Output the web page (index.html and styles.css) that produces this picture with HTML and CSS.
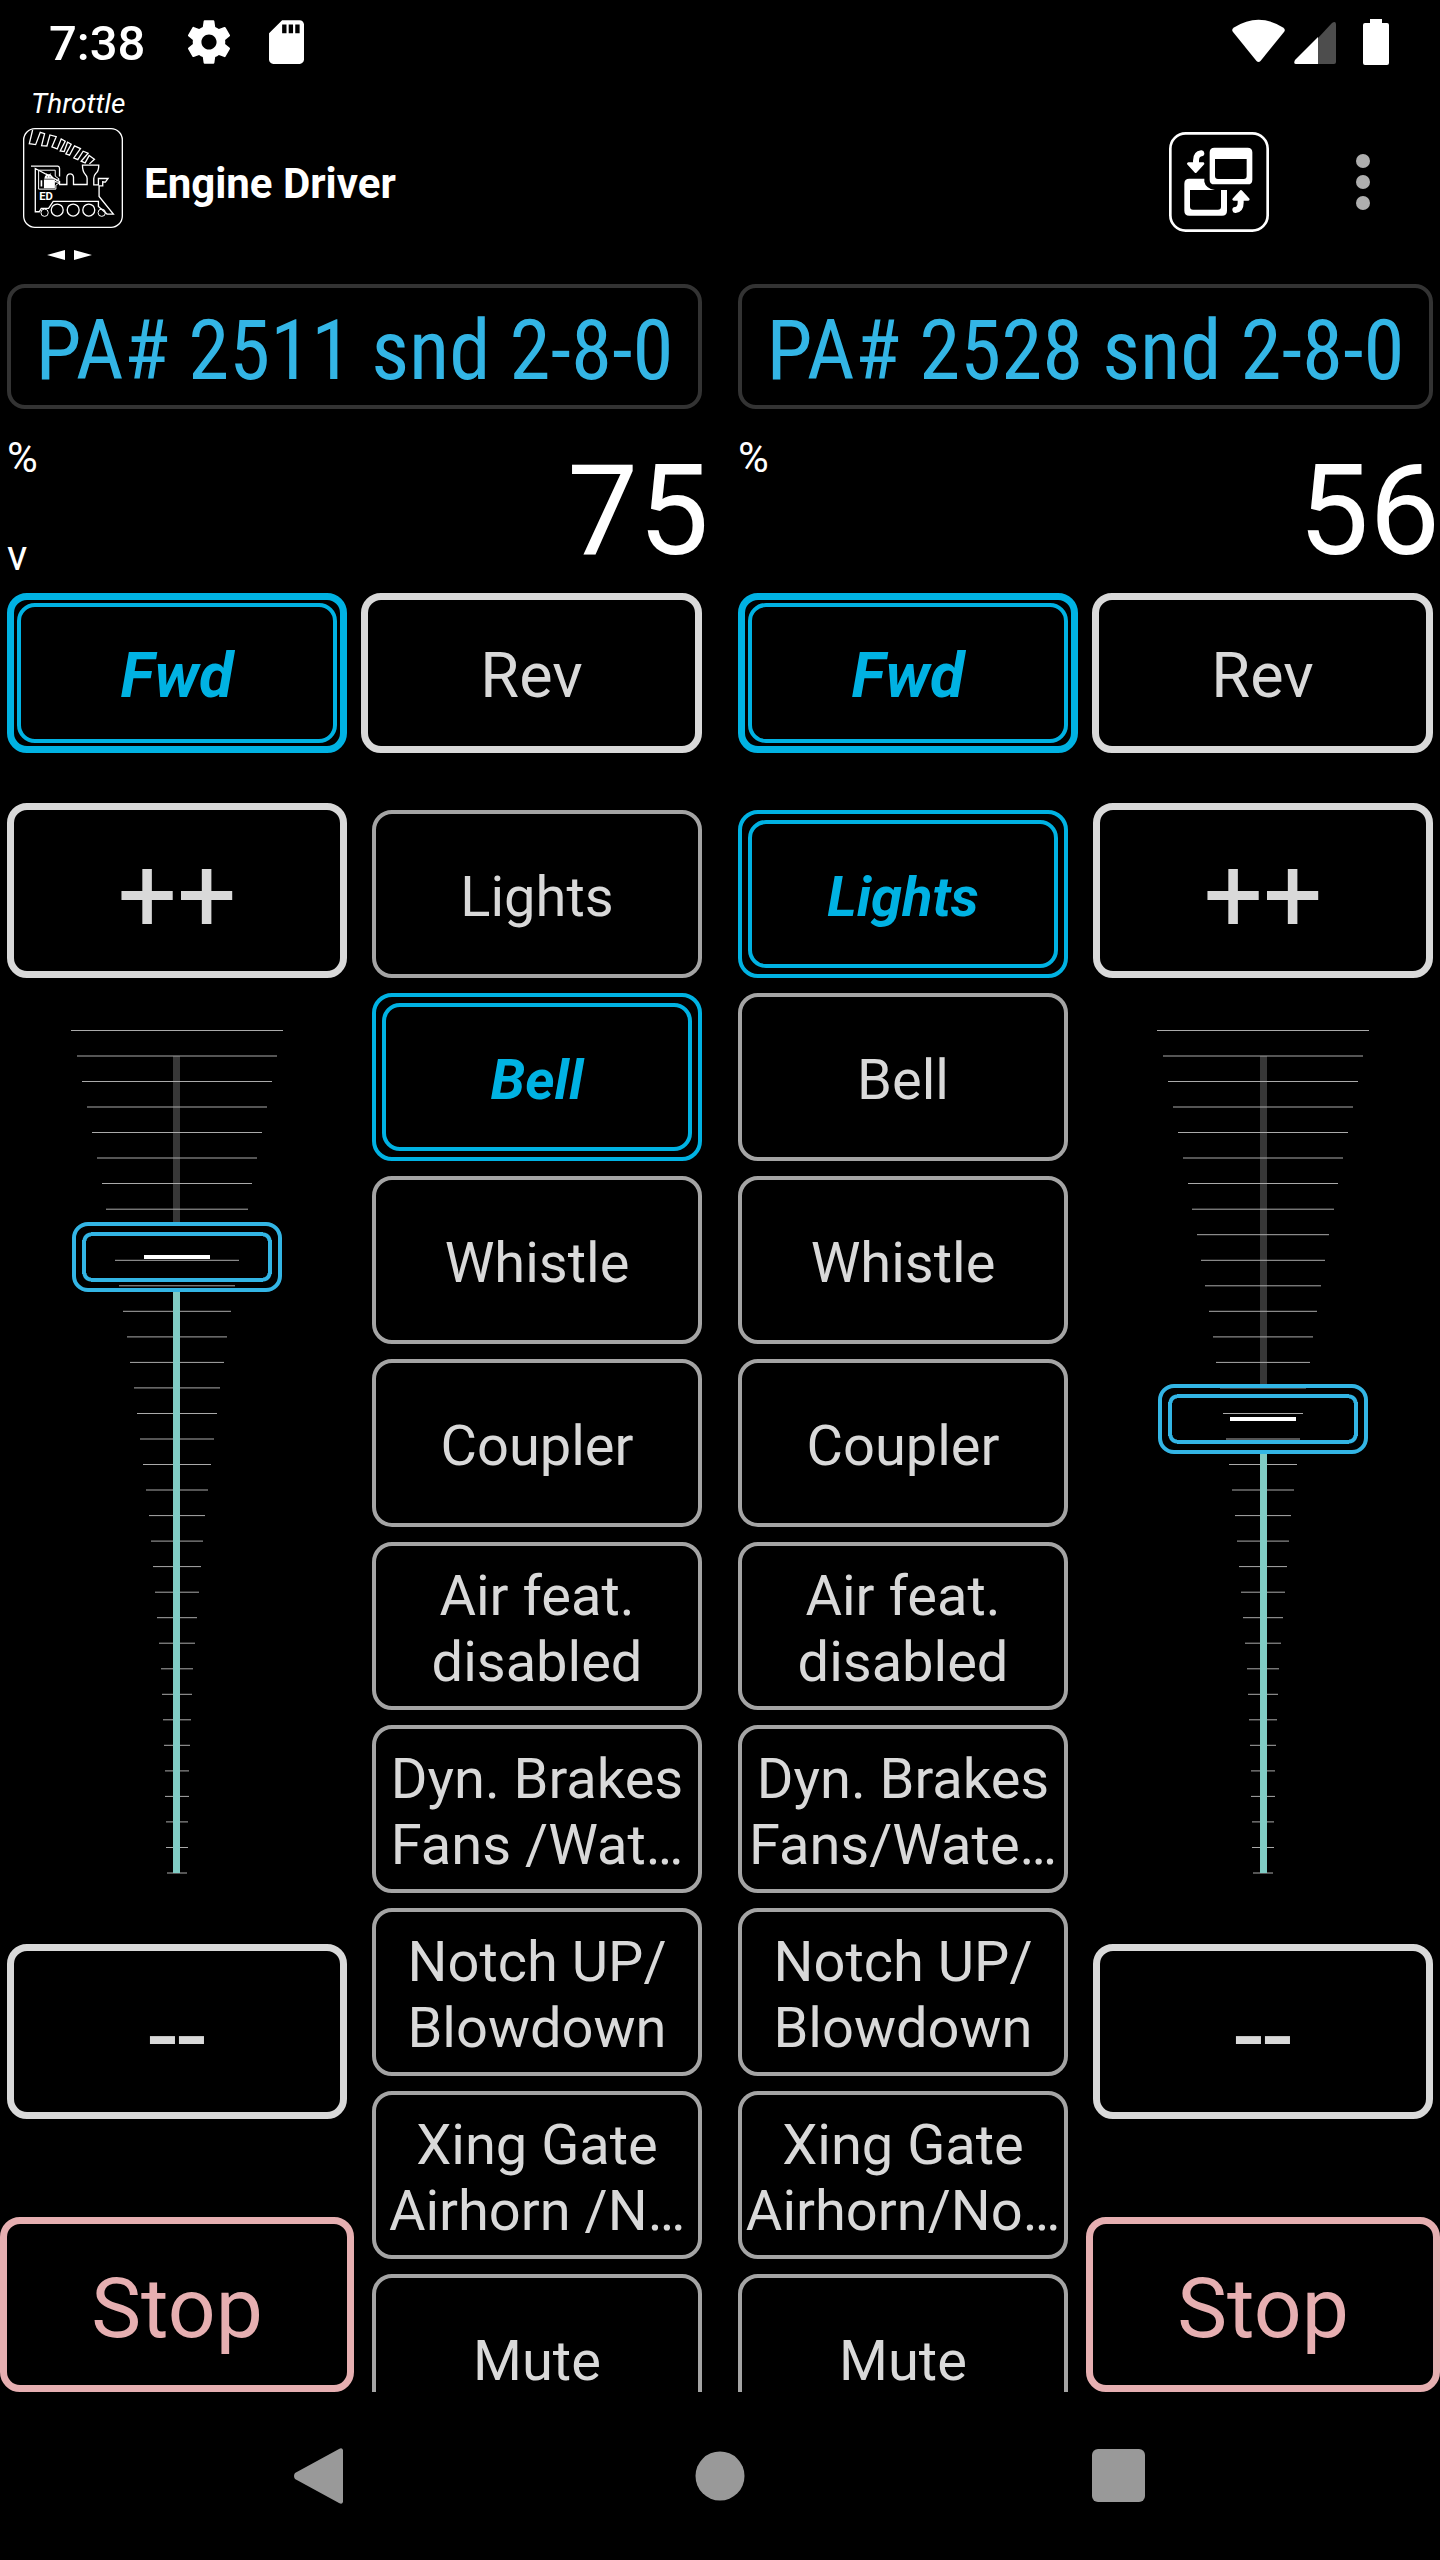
FILE: index.html
```html
<!DOCTYPE html>
<html lang="en">
<head>
<meta charset="utf-8">
<meta name="viewport" content="width=device-width, initial-scale=1">
<title>Engine Driver</title>
<link rel="stylesheet" href="styles.css">
</head>
<body>
<svg class="defs" aria-hidden="true">
  <defs>
    <path id="ticks" d="M0 9.5H212M6 35H206M11 60.5H201M16 86H196M21 111.5H191M26 137H186M31 162.5H181M35 188.2H177M40 213.7H172M44 239.3H168M48 264.8H164M52 290.3H160M56 315.9H156M59 341.4H153M63 366.9H149M66 392.5H146M69 418H143M72 443.5H140M75 469H137M78 494.6H134M80 520.1H132M82 545.6H130M84 571.2H128M86 596.7H126M88 622.2H124M90 647.8H122M91 673.3H121M92 698.8H120M93 724.3H119M94 749.9H118M94 775.4H118M95 800.9H117M95 826.5H117M96 852H116"/>
  </defs>
</svg>

<div class="statusbar">
  <time class="clock">7:38</time>
  <svg class="gear" viewBox="0 0 24 24" aria-hidden="true"><path d="M19.43 12.98c.04-.32.07-.64.07-.98s-.03-.66-.07-.98l2.11-1.65c.19-.15.24-.42.12-.64l-2-3.46c-.12-.22-.39-.3-.61-.22l-2.49 1c-.52-.4-1.08-.73-1.69-.98l-.38-2.65C14.46 2.18 14.25 2 14 2h-4c-.25 0-.46.18-.49.42l-.38 2.65c-.61.25-1.17.59-1.69.98l-2.49-1c-.23-.09-.49 0-.61.22l-2 3.46c-.13.22-.07.49.12.64l2.11 1.65c-.04.32-.07.65-.07.98s.03.66.07.98l-2.11 1.65c-.19.15-.24.42-.12.64l2 3.46c.12.22.39.3.61.22l2.49-1c.52.4 1.08.73 1.69.98l.38 2.65c.03.24.24.42.49.42h4c.25 0 .46-.18.49-.42l.38-2.65c.61-.25 1.17-.59 1.69-.98l2.49 1c.23.09.49 0 .61-.22l2-3.46c.12-.22.07-.49-.12-.64l-2.11-1.65zM12 15.5c-1.93 0-3.5-1.57-3.5-3.5s1.57-3.5 3.5-3.5 3.5 1.57 3.5 3.5-1.57 3.5-3.5 3.5z"/></svg>
  <svg class="sdcard" viewBox="4 2 16 20" aria-hidden="true"><path d="M18 2h-8L4.02 8 4 20c0 1.1.9 2 2 2h12c1.1 0 2-.9 2-2V4c0-1.1-.9-2-2-2zm-6 6h-2V4h2v4zm3 0h-2V4h2v4zm3 0h-2V4h2v4z"/></svg>
  <svg class="signals" viewBox="1232 19 158 47" aria-hidden="true">
    <path d="M1233 32Q1231 29.500 1234 27.500Q1258.500 12 1283 27.500Q1286 29.500 1284 32L1260.500 61Q1258.500 63 1256.500 61Z"/>
    <path fill="#4d4d4d" d="M1318 38L1332 23Q1336 20 1336 25V62Q1336 64 1334 64H1318Z"/>
    <path d="M1318 37V64H1296Q1293 64 1295 60Z"/>
    <path d="M1370 19h12v4h5q2 0 2 2v38q0 2-2 2h-22q-2 0-2-2V25q0-2 2-2h5z"/>
  </svg>
</div>

<header class="appbar">
  <div class="brand">
    <span class="screen">Throttle</span>
    <svg class="logo" viewBox="69 384 301 301" aria-hidden="true">
      <rect x="71" y="386" width="297" height="297" rx="34"/>
      <path d="M98 390L88 431L107 434L121 397L134 401L125 437L141 438L150 405L169 410L156 441L172 447L184 417L196 424L181 453L193 455L203 427L214 433L198 462L209 466L224 438L242 446L222 474L234 479L250 454L265 460L244 484L256 489L268 467L284 478L269 492"/>
      <path d="M93 499H174Q179 500 179 506V530M179 545V554H201V532Q202 522 211 522T221 532V554H262V535Q262 529 256 523Q248 514 248 496H297Q297 514 288 521Q282 527 282 536V555H296V536H325L317 547L309 546V558H298V590L341 643H322L296 620V605H160L146 626H124L118 636H106V506Z"/>
      <path d="M116 568V511H166V529L178 538L165 546L180 548L168 556V568Z" stroke-width="3"/>
      <path fill="#fff" stroke="none" d="M133 537Q134 527 140 525L138 520L144 523H148L154 520L152 525Q158 527 160 537ZM132 539H165V565H132ZM122 541H127V560H122Z"/>
      <path stroke="#000" stroke-width="2" d="M141 531h3M149 531h3"/>
      <g stroke-width="4"><circle cx="172" cy="631" r="18"/><circle cx="220" cy="631" r="18"/><circle cx="267" cy="631" r="18"/></g>
      <g stroke-width="3"><circle cx="134" cy="639" r="11"/><circle cx="306" cy="639" r="11"/></g>
      <text class="logo-text" x="118" y="600">ED</text>
    </svg>
    <svg class="swipe" viewBox="0 0 100 10" aria-hidden="true"><path d="M24 5L42 0V10ZM69 5L51 0V10Z"/></svg>
  </div>
  <h1 class="title">Engine Driver</h1>
  <button class="icon-btn" type="button" aria-label="Switch throttle layout">
    <svg class="swap" viewBox="207 396 300 300" aria-hidden="true">
      <rect x="211" y="400" width="292" height="292" rx="46" fill="none" stroke="#fff" stroke-width="8"/>
      <path fill-rule="evenodd" d="M343 443H443Q457 443 457 457V539Q457 553 443 553H343Q329 553 329 539V457Q329 443 343 443ZM345 477V528Q345 537 354 537H431Q440 537 440 528V477Z"/>
      <path d="M268 536H313V545Q317 565 345 570H270V620Q270 629 279 629H354Q363 629 363 620V570H381V632Q381 647 366 647H268Q253 647 253 632V551Q253 536 268 536Z"/>
      <path d="M304 460Q288 462 288 482V490M406 630Q422 628 422 608V600" fill="none" stroke="#fff" stroke-width="18" stroke-linecap="round"/>
      <path d="M265 491H309L287 515ZM401 598H445L423 574Z" stroke="#fff" stroke-width="8" stroke-linejoin="round"/>
    </svg>
  </button>
  <button class="icon-btn more" type="button" aria-label="More options">
    <svg class="dots" viewBox="0 0 14 56" aria-hidden="true"><circle cx="7" cy="7" r="7"/><circle cx="7" cy="28" r="7"/><circle cx="7" cy="49" r="7"/></svg>
  </button>
</header>

<main class="throttles">
  <section class="throttle">
    <button class="loco" type="button">PA# 2511 snd 2-8-0</button>
    <div class="readout">
      <div class="marks"><span>%</span><span>v</span></div>
      <output class="speed">75</output>
    </div>
    <div class="direction">
      <button class="btn active" type="button">Fwd</button>
      <button class="btn" type="button">Rev</button>
    </div>
    <div class="panel">
      <div class="controls">
        <button class="btn step" type="button" aria-label="Faster">++</button>
        <div class="slider">
          <svg class="scale" viewBox="0 0 212 887" aria-hidden="true">
            <path class="rail" d="M105.500 35V201"/>
            <use class="tick" href="#ticks"/>
            <path class="fill" d="M105.500 271V852"/>
          </svg>
          <input class="range" type="range" min="0" max="126" value="95" aria-label="Speed of PA# 2511">
        </div>
        <button class="btn step" type="button" aria-label="Slower">--</button>
        <button class="btn stop" type="button">Stop</button>
      </div>
      <div class="functions">
        <button class="fn" type="button">Lights</button>
        <button class="fn active" type="button">Bell</button>
        <button class="fn" type="button">Whistle</button>
        <button class="fn" type="button">Coupler</button>
        <button class="fn" type="button">Air feat.<br>disabled</button>
        <button class="fn" type="button">Dyn. Brakes<br>Fans /Wat…</button>
        <button class="fn" type="button">Notch UP/<br>Blowdown</button>
        <button class="fn" type="button">Xing Gate<br>Airhorn /N…</button>
        <button class="fn" type="button">Mute</button>
      </div>
    </div>
  </section>

  <section class="throttle">
    <button class="loco" type="button">PA# 2528 snd 2-8-0</button>
    <div class="readout">
      <div class="marks"><span>%</span></div>
      <output class="speed">56</output>
    </div>
    <div class="direction">
      <button class="btn active" type="button">Fwd</button>
      <button class="btn" type="button">Rev</button>
    </div>
    <div class="panel mirrored">
      <div class="functions">
        <button class="fn active" type="button">Lights</button>
        <button class="fn" type="button">Bell</button>
        <button class="fn" type="button">Whistle</button>
        <button class="fn" type="button">Coupler</button>
        <button class="fn" type="button">Air feat.<br>disabled</button>
        <button class="fn" type="button">Dyn. Brakes<br>Fans/Wate…</button>
        <button class="fn" type="button">Notch UP/<br>Blowdown</button>
        <button class="fn" type="button">Xing Gate<br>Airhorn/No…</button>
        <button class="fn" type="button">Mute</button>
      </div>
      <div class="controls">
        <button class="btn step" type="button" aria-label="Faster">++</button>
        <div class="slider">
          <svg class="scale" viewBox="0 0 212 887" aria-hidden="true">
            <path class="rail" d="M106.500 35V363"/>
            <use class="tick" href="#ticks"/>
            <path class="fill" d="M106.500 433V852"/>
          </svg>
          <input class="range" type="range" min="0" max="126" value="70" aria-label="Speed of PA# 2528">
        </div>
        <button class="btn step" type="button" aria-label="Slower">--</button>
        <button class="btn stop" type="button">Stop</button>
      </div>
    </div>
  </section>
</main>

<nav class="navbar">
  <button class="nav-btn" type="button" aria-label="Back"><svg viewBox="0 0 54 56" aria-hidden="true"><path d="M49 2V54Q48 57 45 55L1 31Q-1 28 1 25L45 1Q48-1 49 2Z"/></svg></button>
  <button class="nav-btn" type="button" aria-label="Home"><svg viewBox="0 0 54 56" aria-hidden="true"><circle cx="27" cy="28" r="24.500"/></svg></button>
  <button class="nav-btn" type="button" aria-label="Recent apps"><svg viewBox="0 0 54 56" aria-hidden="true"><rect x="0" y="1" width="53" height="53" rx="6"/></svg></button>
</nav>
</body>
</html>
```
FILE: styles.css
```css
* { box-sizing: border-box; }

body {
  margin: 0;
  min-height: 100vh;
  display: flex;
  flex-direction: column;
  background: #000;
  color: #fff;
  font-family: Roboto, "Liberation Sans", sans-serif;
}

button {
  margin: 0;
  border: 0;
  background: none;
  color: inherit;
  font: inherit;
}

svg { display: block; fill: #fff; }

.defs { position: absolute; width: 0; height: 0; }

/* status bar */
.statusbar {
  display: flex;
  align-items: center;
  height: 84px;
  padding: 0 50px 0 49px;
}
.clock { font-size: 49px; font-weight: 500; line-height: 56px; margin-top: 3px; }
.gear { width: 52px; height: 52px; margin-left: 38px; }
.sdcard { width: 35px; height: 44px; margin-left: 34px; }
.signals { width: 158px; height: 47px; margin-left: auto; }

/* app bar */
.appbar {
  display: flex;
  align-items: center;
  height: 200px;
  padding: 0 70px 4px 23px;
}
.brand { align-self: flex-start; width: 121px; padding-top: 4px; }
.screen {
  display: block;
  padding-left: 8px;
  font-size: 28px;
  font-style: italic;
  line-height: 32px;
}
.logo {
  width: 100px;
  height: 100px;
  margin-top: 8px;
  fill: none;
  stroke: #fff;
  stroke-width: 4px;
}
.logo-text { fill: #fff; stroke: none; font-size: 34px; font-weight: 700; }
.swipe { width: 100px; height: 10px; margin-top: 22px; }
.title {
  margin: 4px auto 0 0;
  font-size: 42px;
  font-weight: 700;
  line-height: 50px;
}
.icon-btn { padding: 0; }
.swap { width: 100px; height: 100px; }
.more { margin-left: 87px; }
.dots { width: 14px; height: 56px; fill: #aeaeae; }

/* throttles */
.throttles {
  flex: 1;
  display: grid;
  grid-template-columns: 1fr 1fr;
  gap: 22px;
}
.throttle { display: flex; flex-direction: column; min-width: 0; }

.loco {
  height: 125px;
  margin: 0 7px;
  padding: 8px 0 0;
  border: 4px solid #333;
  border-radius: 18px;
  color: #33b5e5;
  font-family: "Roboto Condensed", Roboto, sans-serif;
  font-size: 83px;
  line-height: 98px;
  white-space: nowrap;
}

.readout {
  display: flex;
  justify-content: space-between;
  align-items: flex-start;
  height: 184px;
  padding: 24px 0 0 7px;
}
.marks {
  display: flex;
  flex-direction: column;
  justify-content: space-between;
  height: 148px;
  font-size: 42px;
  line-height: 50px;
}
.speed { margin-top: 4px; font-size: 126px; line-height: 148px; }

.direction {
  display: grid;
  grid-template-columns: 340fr 341fr;
  gap: 14px;
  padding: 0 7px;
}

.btn, .fn {
  position: relative;
  padding: 5px 0 0;
  border: 7px solid #d9d9d9;
  border-radius: 20px;
  color: #d9d9d9;
  text-align: center;
  white-space: nowrap;
}
.btn { height: 160px; font-size: 63px; line-height: 74px; }
.active {
  border-color: #00b2e3;
  color: #00b2e3;
  font-weight: 700;
  font-style: italic;
}
.active::after {
  content: "";
  position: absolute;
  inset: 3px;
  border: 4px solid #00b2e3;
  border-radius: 18px;
}

.panel {
  flex: 1;
  display: grid;
  grid-template-columns: 340fr 330fr;
  gap: 25px;
  margin-top: 50px;
  padding: 0 7px;
}
.mirrored { grid-template-columns: 330fr 340fr; }

.controls { display: flex; flex-direction: column; }
.step { height: 175px; padding-top: 10px; font-size: 105px; line-height: 124px; }
.slider {
  display: grid;
  justify-content: center;
  margin: 43px 0 36px;
}
.scale, .range { grid-area: 1 / 1; width: 212px; height: 887px; }
.rail { stroke: #373737; stroke-width: 7; }
.tick { stroke: #aaa; stroke-width: 1; }
.fill { stroke: #80cbc4; stroke-width: 7; }
.range {
  appearance: none;
  margin: 0;
  background: none;
  writing-mode: vertical-lr;
  direction: rtl;
}
.range::-webkit-slider-runnable-track { width: 212px; height: 887px; }
.range::-webkit-slider-thumb {
  appearance: none;
  width: 210px;
  height: 70px;
  margin-left: 1px;
  border: 4px solid #33b5e5;
  border-radius: 16px;
  background:
    linear-gradient(#fff, #fff) center / 66px 4px no-repeat,
    linear-gradient(#33b5e5, #33b5e5) center top 6px / 172px 4px no-repeat,
    linear-gradient(#33b5e5, #33b5e5) center bottom 6px / 172px 4px no-repeat,
    linear-gradient(#33b5e5, #33b5e5) left 6px center / 4px 34px no-repeat,
    linear-gradient(#33b5e5, #33b5e5) right 6px center / 4px 34px no-repeat,
    radial-gradient(circle at 100% 100%, transparent 4px, #33b5e5 5px, #33b5e5 8px, transparent 9px) left 6px top 6px / 9px 9px no-repeat,
    radial-gradient(circle at 0 100%, transparent 4px, #33b5e5 5px, #33b5e5 8px, transparent 9px) right 6px top 6px / 9px 9px no-repeat,
    radial-gradient(circle at 100% 0, transparent 4px, #33b5e5 5px, #33b5e5 8px, transparent 9px) left 6px bottom 6px / 9px 9px no-repeat,
    radial-gradient(circle at 0 0, transparent 4px, #33b5e5 5px, #33b5e5 8px, transparent 9px) right 6px bottom 6px / 9px 9px no-repeat;
}
.stop {
  height: 175px;
  margin: auto -7px 0;
  padding-top: 8px;
  border-color: #e6afb1;
  color: #e6afb1;
  font-size: 84px;
  line-height: 98px;
}

.functions {
  contain: size;
  display: flex;
  flex-direction: column;
  gap: 15px;
  padding-top: 7px;
  overflow-y: auto;
  scrollbar-width: none;
}
.fn {
  flex: none;
  height: 168px;
  border-width: 4px;
  border-color: #a4a4a4;
  font-size: 56px;
  line-height: 66px;
}
.fn.active { border-color: #00b2e3; }
.fn.active::after { inset: 6px; }

/* system navigation */
.navbar {
  display: flex;
  justify-content: center;
  gap: 345px;
  height: 168px;
}
.nav-btn { padding: 0; }
.nav-btn svg { width: 54px; height: 56px; fill: #999; }
```
